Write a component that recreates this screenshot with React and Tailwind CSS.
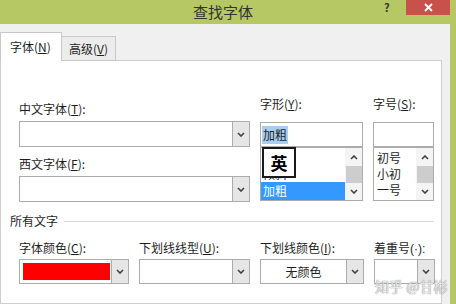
import React from 'react';

const FONT = { fontFamily: '"Microsoft YaHei", "Noto Sans CJK SC", "Noto Sans", sans-serif' };

const Chevron = ({ className = '' }) => (
  <svg width="8" height="5" viewBox="0 0 8 5" className={className}>
    <polyline points="1,1 4,4 7,1" fill="none" stroke="#404040" strokeWidth="1.6" />
  </svg>
);

const ChevronUp = () => (
  <svg width="8" height="5" viewBox="0 0 8 5">
    <polyline points="1,4 4,1 7,4" fill="none" stroke="#404040" strokeWidth="1.6" />
  </svg>
);

const Combo = ({ className = '', height = 'h-[26px]', children }) => (
  <div className={`flex ${height} border border-[#acacac] bg-white ${className}`}>
    <div className="flex-1 flex items-center overflow-hidden">{children}</div>
    <div className="w-[17px] flex items-center justify-center bg-[#e6e6e6] border-l border-[#acacac]">
      <Chevron />
    </div>
  </div>
);

const Scrollbar = () => (
  <div className="w-[17px] flex flex-col items-center bg-[#f4f4f4]">
    <div className="h-[18px] flex items-center justify-center"><ChevronUp /></div>
    <div className="w-[16px] h-[17px] bg-[#cdcdcd]" />
    <div className="flex-1 flex items-center justify-center"><Chevron /></div>
  </div>
);

const Label = ({ children, className = '' }) => (
  <div className={`h-[16px] leading-[16px] text-[12px] text-[#1e1e1e] whitespace-nowrap ${className}`}>{children}</div>
);

export default function App() {
  return (
    <div className="w-[456px] h-[304px] overflow-hidden bg-[#b6c863] flex flex-col" style={FONT}>
      {/* title bar */}
      <div className="h-[24px] flex items-start shrink-0">
        <div className="flex-1 h-[24px] flex items-center justify-center pl-[62px] text-[15px] text-[#333]">查找字体</div>
        <div className="w-[16px] h-[14px] flex items-center text-[11px] font-bold text-[#333] leading-[12px]">?</div>
        <div className="w-[44px] h-[15px] ml-[6px] mr-[6px] bg-[#c9514c] flex items-center justify-center">
          <svg width="9" height="9" viewBox="0 0 9 9">
            <path d="M1 1 L8 8 M8 1 L1 8" stroke="#fff" strokeWidth="1.8" />
          </svg>
        </div>
      </div>

      <div className="flex flex-1">
        <div className="w-[450px] bg-[#f0f0f0] pt-[9px] pr-[8px] flex flex-col">
          {/* tabs */}
          <div className="flex items-end h-[28px] relative z-10">
            <div className="w-[62px] h-[29px] bg-white border border-b-0 border-[#c8c8c8] flex items-center pl-[9px] text-[12px] text-[#1e1e1e]">
              字体(<span className="underline">N</span>)
            </div>
            <div className="w-[54px] h-[25px] bg-[#ececec] border border-l-0 border-[#c8c8c8] flex items-center justify-center text-[12px] text-[#1e1e1e]">
              高级(<span className="underline">V</span>)
            </div>
          </div>

          {/* panel */}
          <div className="relative flex-1 bg-white border border-[#cfcfcf] -mt-px pl-[18px] pt-[35px]">
            <div className="flex items-start gap-[10px]">
              {/* col 1 */}
              <div className="w-[231px] pt-[5px]">
                <Label>中文字体(<span className="underline">T</span>):</Label>
                <Combo className="mt-[4px]" />
                <Label className="mt-[9px]">西文字体(<span className="underline">F</span>):</Label>
                <Combo className="mt-[4px]" />
              </div>

              {/* col 2 */}
              <div className="w-[103px]">
                <Label>字形(<span className="underline">Y</span>):</Label>
                <div className="mt-[10px] h-[25px] border border-[#acacac] bg-white flex items-center pl-px">
                  <span className="bg-[#a6cff2] text-[12px] leading-[18px] px-px text-[#1e1e1e]">加粗</span>
                </div>
                <div className="relative h-[54px] border border-[#acacac] bg-white flex">
                  <div className="flex-1 flex flex-col text-[12px] pt-[2px]">
                    <div className="h-[16px]" />
                    <div className="h-[16px] leading-[16px] pl-[2px] text-[#1e1e1e]">倾斜</div>
                    <div className="h-[18px] leading-[18px] pl-[2px] bg-[#3399ff] text-white">加粗</div>
                  </div>
                  <Scrollbar />
                  <div className="absolute left-[1px] top-[-1px] w-[34px] h-[31px] bg-white border-2 border-[#1a1a1a] flex items-center justify-center text-[17px] font-bold text-black">
                    英
                  </div>
                </div>
              </div>

              {/* col 3 */}
              <div className="w-[61px]">
                <Label>字号(<span className="underline">S</span>):</Label>
                <div className="mt-[10px] h-[25px] border border-[#acacac] bg-white" />
                <div className="h-[54px] border border-[#acacac] bg-white flex">
                  <div className="flex-1 flex flex-col text-[12px] text-[#1e1e1e] pt-[2px] pl-[3px]">
                    <div className="h-[16px] leading-[16px]">初号</div>
                    <div className="h-[16px] leading-[16px]">小初</div>
                    <div className="h-[16px] leading-[16px]">一号</div>
                  </div>
                  <Scrollbar />
                </div>
              </div>
            </div>

            {/* section */}
            <div className="flex items-center mt-[11px] -ml-[9px] mr-[7px]">
              <Label>所有文字</Label>
              <div className="flex-1 h-px bg-[#dcdcdc] ml-[6px]" />
            </div>

            <div className="flex items-start gap-[10px] mt-[11px]">
              <div className="w-[110px]">
                <Label>字体颜色(<span className="underline">C</span>):</Label>
                <Combo className="mt-[3px]" height="h-[25px]">
                  <div className="ml-[3px] w-[87px] h-[17px] bg-[#ff0000]" />
                </Combo>
              </div>
              <div className="w-[111px]">
                <Label>下划线线型(<span className="underline">U</span>):</Label>
                <Combo className="mt-[3px]" height="h-[25px]" />
              </div>
              <div className="w-[104px]">
                <Label>下划线颜色(<span className="underline">I</span>):</Label>
                <Combo className="mt-[3px]" height="h-[25px]">
                  <div className="w-full text-center text-[12px] text-[#1e1e1e]">无颜色</div>
                </Combo>
              </div>
              <div className="w-[61px]">
                <Label>着重号<span style={{ fontFamily: '"Liberation Sans", sans-serif' }}>(·):</span></Label>
                <Combo className="mt-[3px]" height="h-[25px]" />
              </div>
            </div>

            <div className="absolute left-[374px] top-[215px] text-[14px] text-white/80 whitespace-nowrap [text-shadow:0_0_1px_#888,0_0_1px_#888]">
              知乎 @甘彬
            </div>
          </div>
        </div>
      </div>
    </div>
  );
}
